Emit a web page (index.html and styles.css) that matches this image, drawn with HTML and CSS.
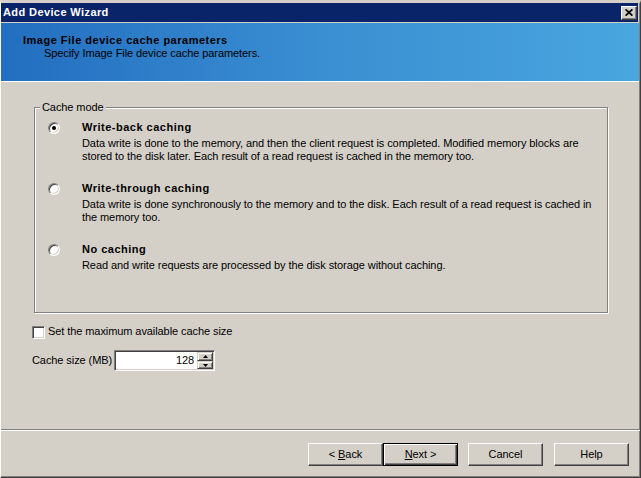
FILE: index.html
```html
<!DOCTYPE html>
<html>
<head>
<meta charset="utf-8">
<link rel="stylesheet" href="styles.css">
</head>
<body>
<div class="window">
  <div class="titlebar">
    <span class="title">Add Device Wizard</span>
    <span class="close"><svg width="8" height="7" viewBox="0 0 8 7"><path d="M0.6 0.4 L7.4 6.6 M7.4 0.4 L0.6 6.6" stroke="#000" stroke-width="1.8" fill="none"/></svg></span>
  </div>
  <div class="header">
    <div class="h-title">Image File device cache parameters</div>
    <div class="h-sub">Specify Image File device cache parameters.</div>
  </div>
  <fieldset class="group">
    <legend>Cache mode</legend>
    <div class="options">
      <div class="option">
        <span class="radio checked"></span>
        <div class="opt-text">
          <div class="opt-title">Write-back caching</div>
          <div class="opt-desc">Data write is done to the memory, and then the client request is completed. Modified memory blocks are<br>stored to the disk later. Each result of a read request is cached in the memory too.</div>
        </div>
      </div>
      <div class="option">
        <span class="radio"></span>
        <div class="opt-text">
          <div class="opt-title">Write-through caching</div>
          <div class="opt-desc">Data write is done synchronously to the memory and to the disk. Each result of a read request is cached in<br>the memory too.</div>
        </div>
      </div>
      <div class="option">
        <span class="radio"></span>
        <div class="opt-text">
          <div class="opt-title">No caching</div>
          <div class="opt-desc">Read and write requests are processed by the disk storage without caching.</div>
        </div>
      </div>
    </div>
  </fieldset>
  <div class="check-row">
    <span class="checkbox"></span>
    <span>Set the maximum available cache size</span>
  </div>
  <div class="size-row">
    <span class="size-label">Cache size (MB)</span>
    <div class="spin">
      <span class="spin-value">128</span>
      <div class="spin-btns">
        <span class="spin-btn up"><svg width="5" height="3" viewBox="0 0 5 3"><path d="M2.5 0 L5 3 L0 3 Z" fill="#000"/></svg></span>
        <span class="spin-btn down"><svg width="5" height="3" viewBox="0 0 5 3"><path d="M0 0 L5 0 L2.5 3 Z" fill="#000"/></svg></span>
      </div>
    </div>
  </div>
  <div class="footer">
    <button class="btn"><span>&lt; <u>B</u>ack</span></button>
    <button class="btn default"><span><u>N</u>ext &gt;</span></button>
    <button class="btn cancel"><span>Cancel</span></button>
    <button class="btn help"><span>Help</span></button>
  </div>
</div>
</body>
</html>
```
FILE: styles.css
```css
html, body {
  margin: 0;
  padding: 0;
  background: #d4d0c8;
}
body {
  font-family: "Liberation Sans", Arial, sans-serif;
  font-size: 11px;
  line-height: 13px;
  letter-spacing: -0.08px;
  color: #000;
}
.window {
  width: 641px;
  height: 478px;
  box-sizing: border-box;
  border-top: 3px solid #d4d0c8;
  border-left: 1px solid #fff;
  border-right: 1px solid #404040;
  border-bottom: 1px solid #404040;
  box-shadow: inset -1px -1px #808080;
  background: #d4d0c8;
  display: flex;
  flex-direction: column;
  overflow: hidden;
}
.titlebar {
  height: 19px;
  margin-right: 2px;
  background: #0a246a;
  display: flex;
  align-items: center;
  justify-content: space-between;
  padding-left: 2px;
}
.title {
  color: #fff;
  font-weight: bold;
  letter-spacing: 0.4px;
}
.close {
  width: 16px;
  height: 14px;
  box-sizing: border-box;
  margin-right: 1px;
  border: 1px solid;
  border-color: #fff #404040 #404040 #fff;
  box-shadow: inset -1px -1px #808080;
  background: #d4d0c8;
  display: flex;
  align-items: center;
  justify-content: center;
}
.close svg {
  display: block;
}
.header {
  margin-top: 1px;
  margin-right: 1px;
  height: 47px;
  padding: 11px 0 0 22px;
  border-bottom: 1px solid #fff;
  background: linear-gradient(to right, #226ec0 0%, #3a8ed2 50%, #49a6de 100%);
}
.h-title {
  font-weight: bold;
  letter-spacing: 0.5px;
}
.h-sub {
  padding-left: 21px;
}
.group {
  margin: 19px 32px 0 33px;
  padding: 0;
  border: 1px solid #808080;
  box-shadow: inset 1px 1px #fff, 1px 1px #fff;
  min-width: 0;
}
.group legend {
  margin-left: 5px;
  padding: 0 2px;
  background: #d4d0c8;
}
.options {
  padding: 7px 0 40px 13px;
}
.option {
  display: flex;
  align-items: flex-start;
}
.option + .option {
  margin-top: 19px;
}
.radio {
  flex: none;
  width: 12px;
  height: 12px;
  box-sizing: border-box;
  margin-top: 1px;
  margin-right: 22px;
  border-radius: 50%;
  border: 1px solid;
  border-color: #808080 #fff #fff #808080;
  box-shadow: inset 1px 1px #404040, inset -1px -1px #d4d0c8;
  background: #fff;
  position: relative;
}
.radio.checked::after {
  content: "";
  position: absolute;
  left: 3px;
  top: 3px;
  width: 4px;
  height: 4px;
  border-radius: 50%;
  background: #000;
}
.opt-title {
  font-weight: bold;
  letter-spacing: 0.5px;
}
.opt-desc {
  margin-top: 3px;
  white-space: nowrap;
}
.check-row {
  margin: 12px 0 0 31px;
  display: flex;
  align-items: flex-start;
}
.checkbox {
  flex: none;
  width: 13px;
  height: 13px;
  box-sizing: border-box;
  margin-top: 1px;
  margin-right: 3px;
  border: 1px solid;
  border-color: #808080 #fff #fff #808080;
  box-shadow: inset 1px 1px #404040, inset -1px -1px #d4d0c8;
  background: #fff;
}
.size-row {
  margin: 11px 0 0 31px;
  display: flex;
  align-items: center;
}
.size-label {
  width: 82px;
}
.spin {
  width: 101px;
  height: 21px;
  box-sizing: border-box;
  padding: 1px;
  border: 1px solid;
  border-color: #808080 #fff #fff #808080;
  box-shadow: inset 1px 1px #404040, inset -1px -1px #d4d0c8;
  background: #fff;
  display: flex;
}
.spin-value {
  flex: 1;
  text-align: right;
  padding-right: 3px;
  line-height: 17px;
}
.spin-btns {
  width: 16px;
  display: flex;
  flex-direction: column;
}
.spin-btn {
  box-sizing: border-box;
  border: 1px solid;
  border-color: #d4d0c8 #404040 #404040 #d4d0c8;
  box-shadow: inset 1px 1px #fff, inset -1px -1px #808080;
  background: #d4d0c8;
  display: flex;
  align-items: center;
  justify-content: center;
}
.spin-btn.up {
  height: 9px;
}
.spin-btn.down {
  height: 8px;
}
.spin-btn svg {
  display: block;
}
.footer {
  margin-top: auto;
  border-top: 1px solid #808080;
  box-shadow: inset 0 1px #fff;
  padding: 13px 11px 11px 0;
  display: flex;
  justify-content: flex-end;
}
.btn {
  width: 75px;
  height: 23px;
  box-sizing: border-box;
  margin: 0;
  padding: 0;
  border: 1px solid;
  border-color: #fff #404040 #404040 #fff;
  box-shadow: inset -1px -1px #808080;
  background: #d4d0c8;
  font: inherit;
  letter-spacing: inherit;
  color: #000;
  display: flex;
  align-items: center;
  justify-content: center;
}
.btn span {
  white-space: pre;
}
.btn.default {
  border-color: #000;
  box-shadow: inset 1px 1px #fff, inset -1px -1px #404040, inset -2px -2px #808080;
}
.btn.cancel {
  margin-left: 10px;
}
.btn.help {
  margin-left: 11px;
}
```
